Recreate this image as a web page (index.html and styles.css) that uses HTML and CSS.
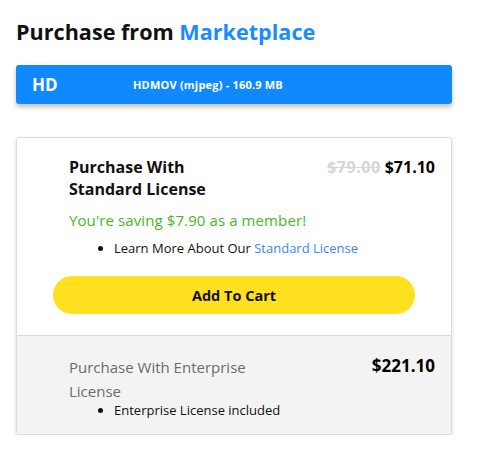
FILE: index.html
```html
<!DOCTYPE html>
<html>
<head>
<meta charset="utf-8">
<link rel="stylesheet" href="styles.css">
</head>
<body>
<div class="page">
  <h1 class="title">Purchase from <span class="accent">Marketplace</span></h1>
  <div class="format-bar">
    <span class="format-name">HD</span>
    <span class="format-detail">HDMOV (mjpeg) - 160.9 MB</span>
  </div>
  <div class="card">
    <div class="option option-standard">
      <div class="option-head">
        <div class="option-title">Purchase With<br>Standard License</div>
        <div class="price"><span class="old-price">$79.00</span> <span class="new-price">$71.10</span></div>
      </div>
      <div class="saving">You're saving $7.90 as a member!</div>
      <ul class="features">
        <li>Learn More About Our <a class="link" href="#">Standard License</a></li>
      </ul>
      <button class="cart-btn">Add To Cart</button>
    </div>
    <div class="option option-enterprise">
      <div class="option-head">
        <div class="option-title-light">Purchase With Enterprise<br>License</div>
        <div class="price"><span class="new-price big">$221.10</span></div>
      </div>
      <ul class="features tight">
        <li>Enterprise License included</li>
      </ul>
    </div>
  </div>
</div>
</body>
</html>
```

FILE: styles.css
```css
* { box-sizing: border-box; }
body {
  margin: 0;
  background: #fff;
  font-family: "Open Sans", "Liberation Sans", sans-serif;
  color: #111;
}
.page {
  width: 436px;
  margin-left: 16px;
  padding-top: 17px;
}
.title {
  margin: 0;
  font-size: 21.6px;
  line-height: 30px;
  font-weight: 700;
  color: #111;
}
.accent { color: #1a8cff; }
.format-bar {
  margin-top: 18px;
  height: 39px;
  background: #1189fe;
  border-radius: 3px;
  box-shadow: 0 3px 5px rgba(0,0,0,0.25);
  display: grid;
  grid-template-columns: 101px 1fr;
  align-items: center;
  padding-left: 16px;
  color: #fff;
}
.format-name { font-size: 17px; font-weight: 700; }
.format-detail { font-size: 11px; font-weight: 700; letter-spacing: 0.2px; }
.card {
  margin-top: 33px;
  border: 1px solid #dcdcdc;
  border-radius: 3px;
  box-shadow: 0 2px 4px rgba(0,0,0,0.15);
  overflow: hidden;
}
.option-standard {
  padding: 18px 16px 21px 36px;
  border-bottom: 1px solid #dcdcdc;
}
.option-head {
  display: flex;
  justify-content: space-between;
  align-items: flex-start;
  padding-left: 16px;
}
.option-title {
  font-size: 16px;
  font-weight: 700;
  line-height: 22px;
}
.price { font-size: 16px; font-weight: 700; line-height: 22px; }
.old-price { color: #d6d6d6; text-decoration: line-through; letter-spacing: 0.5px; }
.new-price { color: #000; }
.new-price.big { font-size: 17px; }
.saving {
  margin-top: 10px;
  padding-left: 16px;
  color: #44b81f;
  font-size: 15px;
  line-height: 20px;
  letter-spacing: 0.1px;
}
.features {
  margin: 9px 0 0;
  padding-left: 61px;
  font-size: 13px;
  line-height: 18px;
}
.link { color: #3b86f7; text-decoration: none; }
.cart-btn {
  display: block;
  margin-top: 19px;
  width: 362px;
  height: 38px;
  border: none;
  border-radius: 19px;
  background: #ffe01f;
  font-family: inherit;
  font-size: 14.5px;
  font-weight: 700;
  color: #111;
}
.option-enterprise {
  background: #f3f3f3;
  padding: 19px 16px 15px 36px;
}
.option-title-light {
  font-size: 15px;
  line-height: 24px;
  color: #6b6b6b;
}
.features.tight { margin-top: -2px; }
```
